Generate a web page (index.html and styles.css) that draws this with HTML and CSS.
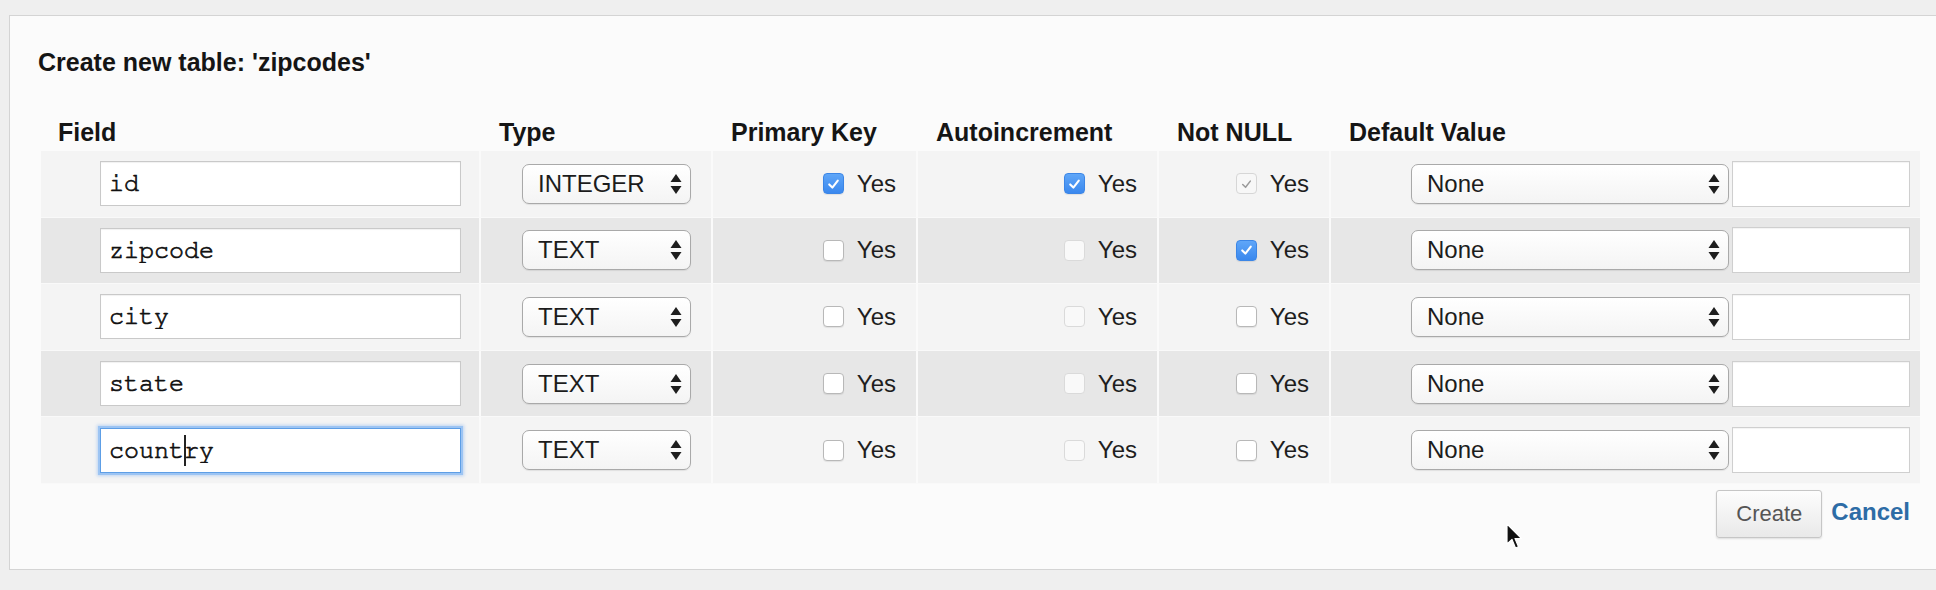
FILE: index.html
```html
<!DOCTYPE html>
<html>
<head>
<meta charset="utf-8">
<title>Create new table</title>
<link rel="stylesheet" href="styles.css">
</head>
<body>
<div class="panel">
  <h2 class="title">Create new table: 'zipcodes'</h2>
  <div class="table">
    <div class="row head">
      <div class="hcell first">Field</div>
      <div class="hcell">Type</div>
      <div class="hcell">Primary Key</div>
      <div class="hcell">Autoincrement</div>
      <div class="hcell">Not NULL</div>
      <div class="hcell">Default Value</div>
    </div>

    <div class="row odd">
      <div class="cell c-field"><input class="field" type="text" value="id"></div>
      <div class="cell c-type"><div class="select small"><span>INTEGER</span><svg class="arrows" viewBox="0 0 12 20" width="12" height="20"><path d="M6 0 L11.5 8 H0.5 Z M6 20 L11.5 12 H0.5 Z"/></svg></div></div>
      <div class="cell c-chk"><span class="cb checked"><svg viewBox="0 0 20 20"><path d="M5.5 10.5 L8.8 13.8 L14.5 6.5"/></svg></span><span class="yes">Yes</span></div>
      <div class="cell c-chk"><span class="cb checked"><svg viewBox="0 0 20 20"><path d="M5.5 10.5 L8.8 13.8 L14.5 6.5"/></svg></span><span class="yes">Yes</span></div>
      <div class="cell c-chk"><span class="cb disabled-checked"><svg viewBox="0 0 20 20"><path d="M6 10.5 L9 13.5 L14 7"/></svg></span><span class="yes">Yes</span></div>
      <div class="cell c-def"><div class="select wide"><span>None</span><svg class="arrows" viewBox="0 0 12 20" width="12" height="20"><path d="M6 0 L11.5 8 H0.5 Z M6 20 L11.5 12 H0.5 Z"/></svg></div><input class="defval" type="text" value=""></div>
    </div>

    <div class="row even">
      <div class="cell c-field"><input class="field" type="text" value="zipcode"></div>
      <div class="cell c-type"><div class="select small"><span>TEXT</span><svg class="arrows" viewBox="0 0 12 20" width="12" height="20"><path d="M6 0 L11.5 8 H0.5 Z M6 20 L11.5 12 H0.5 Z"/></svg></div></div>
      <div class="cell c-chk"><span class="cb"></span><span class="yes">Yes</span></div>
      <div class="cell c-chk"><span class="cb disabled"></span><span class="yes">Yes</span></div>
      <div class="cell c-chk"><span class="cb checked"><svg viewBox="0 0 20 20"><path d="M5.5 10.5 L8.8 13.8 L14.5 6.5"/></svg></span><span class="yes">Yes</span></div>
      <div class="cell c-def"><div class="select wide"><span>None</span><svg class="arrows" viewBox="0 0 12 20" width="12" height="20"><path d="M6 0 L11.5 8 H0.5 Z M6 20 L11.5 12 H0.5 Z"/></svg></div><input class="defval" type="text" value=""></div>
    </div>

    <div class="row odd">
      <div class="cell c-field"><input class="field" type="text" value="city"></div>
      <div class="cell c-type"><div class="select small"><span>TEXT</span><svg class="arrows" viewBox="0 0 12 20" width="12" height="20"><path d="M6 0 L11.5 8 H0.5 Z M6 20 L11.5 12 H0.5 Z"/></svg></div></div>
      <div class="cell c-chk"><span class="cb"></span><span class="yes">Yes</span></div>
      <div class="cell c-chk"><span class="cb disabled"></span><span class="yes">Yes</span></div>
      <div class="cell c-chk"><span class="cb"></span><span class="yes">Yes</span></div>
      <div class="cell c-def"><div class="select wide"><span>None</span><svg class="arrows" viewBox="0 0 12 20" width="12" height="20"><path d="M6 0 L11.5 8 H0.5 Z M6 20 L11.5 12 H0.5 Z"/></svg></div><input class="defval" type="text" value=""></div>
    </div>

    <div class="row even">
      <div class="cell c-field"><input class="field" type="text" value="state"></div>
      <div class="cell c-type"><div class="select small"><span>TEXT</span><svg class="arrows" viewBox="0 0 12 20" width="12" height="20"><path d="M6 0 L11.5 8 H0.5 Z M6 20 L11.5 12 H0.5 Z"/></svg></div></div>
      <div class="cell c-chk"><span class="cb"></span><span class="yes">Yes</span></div>
      <div class="cell c-chk"><span class="cb disabled"></span><span class="yes">Yes</span></div>
      <div class="cell c-chk"><span class="cb"></span><span class="yes">Yes</span></div>
      <div class="cell c-def"><div class="select wide"><span>None</span><svg class="arrows" viewBox="0 0 12 20" width="12" height="20"><path d="M6 0 L11.5 8 H0.5 Z M6 20 L11.5 12 H0.5 Z"/></svg></div><input class="defval" type="text" value=""></div>
    </div>

    <div class="row odd">
      <div class="cell c-field"><div class="focus-wrap"><input class="field focused" type="text" value="country"><span class="caret"></span></div></div>
      <div class="cell c-type"><div class="select small"><span>TEXT</span><svg class="arrows" viewBox="0 0 12 20" width="12" height="20"><path d="M6 0 L11.5 8 H0.5 Z M6 20 L11.5 12 H0.5 Z"/></svg></div></div>
      <div class="cell c-chk"><span class="cb"></span><span class="yes">Yes</span></div>
      <div class="cell c-chk"><span class="cb disabled"></span><span class="yes">Yes</span></div>
      <div class="cell c-chk"><span class="cb"></span><span class="yes">Yes</span></div>
      <div class="cell c-def"><div class="select wide"><span>None</span><svg class="arrows" viewBox="0 0 12 20" width="12" height="20"><path d="M6 0 L11.5 8 H0.5 Z M6 20 L11.5 12 H0.5 Z"/></svg></div><input class="defval" type="text" value=""></div>
    </div>
  </div>

  <div class="actions">
    <button class="btn" type="button">Create</button>
    <a class="cancel" href="#">Cancel</a>
  </div>

  <svg class="pointer" width="18" height="28" viewBox="0 0 18 28"><path d="M1 1 L1 21 L6 16.5 L9.5 25 L12.5 23.8 L9 15.5 L15.5 15.5 Z" fill="#111" stroke="#fff" stroke-width="1.2" stroke-linejoin="round"/></svg>
</div>
</body>
</html>
```

FILE: styles.css
```css
html, body {
  margin: 0;
  padding: 0;
}
body {
  background: #efefef;
  font-family: "Liberation Sans", Arial, Helvetica, sans-serif;
  color: #1a1a1a;
  overflow: hidden;
  width: 1936px;
  height: 590px;
}
.panel {
  position: relative;
  box-sizing: border-box;
  margin: 15px 0 0 9px;
  width: 1940px;
  height: 555px;
  background: #fbfbfb;
  border: 1px solid #d4d4d4;
}
.title {
  margin: 32px 0 0 28px;
  font-size: 25px;
  line-height: 28px;
  font-weight: bold;
  color: #151515;
}
.table {
  margin: 42px 0 0 31px;
  width: 1879px;
}
.row {
  display: grid;
  grid-template-columns: 438px 232px 205px 241px 172px 591px;
}
.head {
  height: 33px;
}
.hcell {
  font-size: 25px;
  line-height: 28px;
  font-weight: bold;
  color: #151515;
  padding-left: 20px;
  white-space: nowrap;
}
.hcell.first {
  padding-left: 17px;
}
.row.odd, .row.even {
  height: 66.6px;
  box-sizing: border-box;
  border-bottom: 1px solid #f9f9f9;
}
.row.odd .cell { background: #f4f4f4; }
.row.even .cell { background: #e7e7e7; }
.cell {
  display: flex;
  align-items: center;
  justify-content: flex-end;
  box-sizing: border-box;
  padding-right: 20px;
  border-left: 2px solid #fafafa;
}
.cell.c-field {
  border-left: none;
  padding-right: 18px;
}
.cell.c-def {
  padding-right: 10px;
  gap: 3px;
}
input.field {
  box-sizing: border-box;
  width: 361px;
  height: 45px;
  margin: 0;
  padding: 0 8px;
  border: 1px solid #c9c9c9;
  border-radius: 0;
  background: #fff;
  box-shadow: inset 0 1px 1px rgba(0,0,0,0.06);
  font-family: "Nimbus Mono PS", "Nimbus Mono L", "FreeMono", "Liberation Mono", "Courier New", monospace;
  font-size: 25px;
  color: #111;
  -webkit-text-stroke: 0.7px #111;
  outline: none;
}
.focus-wrap {
  position: relative;
  display: flex;
}
input.field.focused {
  border: 1px solid #5d9ee6;
  box-shadow: 0 0 0 2px #9cc4f3, 0 0 3px 3px rgba(120,170,240,0.45);
}
.caret {
  position: absolute;
  left: 84px;
  top: 7px;
  width: 2px;
  height: 31px;
  background: #222;
}
.select {
  box-sizing: border-box;
  height: 40px;
  display: flex;
  align-items: center;
  justify-content: space-between;
  padding: 0 8px 0 15px;
  border: 1px solid #a9a9a9;
  border-radius: 7px;
  background: linear-gradient(#ffffff, #f4f4f4);
  box-shadow: 0 1px 1px rgba(0,0,0,0.08);
  font-size: 24px;
  color: #1c1c1c;
}
.select.small { width: 169px; }
.select.wide { width: 318px; }
.arrows path { fill: #1e1e1e; }
input.defval {
  box-sizing: border-box;
  width: 178px;
  height: 46px;
  margin: 0;
  border: 1px solid #cfcfcf;
  background: #fff;
  box-shadow: inset 0 1px 1px rgba(0,0,0,0.05);
}
.cb {
  box-sizing: border-box;
  width: 21px;
  height: 21px;
  border-radius: 4px;
  border: 1px solid #b8b8b8;
  background: #fff;
  box-shadow: 0 1px 1px rgba(0,0,0,0.08);
  display: flex;
  align-items: center;
  justify-content: center;
}
.cb svg {
  width: 20px;
  height: 20px;
}
.cb svg path {
  fill: none;
  stroke: #fff;
  stroke-width: 2.2;
  stroke-linecap: round;
  stroke-linejoin: round;
}
.cb.checked {
  border: 1px solid #3c86e6;
  background: linear-gradient(#5fa6f8, #3a88ee);
}
.cb.disabled {
  border: 1px solid #dadada;
  background: #f9f9f9;
  box-shadow: none;
}
.cb.disabled-checked {
  border: 1px solid #d6d6d6;
  background: #f7f7f7;
  box-shadow: none;
}
.cb.disabled-checked svg path {
  stroke: #9a9a9a;
  stroke-width: 1.6;
}
.yes {
  margin-left: 13px;
  font-size: 24px;
  color: #1e1e1e;
}
.actions {
  width: 1879px;
  margin: 6px 0 0 31px;
  box-sizing: border-box;
  padding-right: 10px;
  display: flex;
  justify-content: flex-end;
  align-items: center;
  gap: 9px;
}
.btn {
  box-sizing: border-box;
  width: 106px;
  height: 48px;
  margin: 0;
  padding: 1px 0 0 0;
  border: 1px solid #c6c6c6;
  border-radius: 3px;
  background: linear-gradient(#fdfdfd, #e9e9e9);
  box-shadow: 0 1px 2px rgba(0,0,0,0.12);
  font-family: "Liberation Sans", Arial, sans-serif;
  font-size: 22px;
  color: #555;
}
.cancel {
  font-size: 24px;
  font-weight: bold;
  color: #2d6ca6;
  text-decoration: none;
  margin-top: -4px;
}
.pointer {
  position: absolute;
  left: 1496px;
  top: 507px;
}
```
